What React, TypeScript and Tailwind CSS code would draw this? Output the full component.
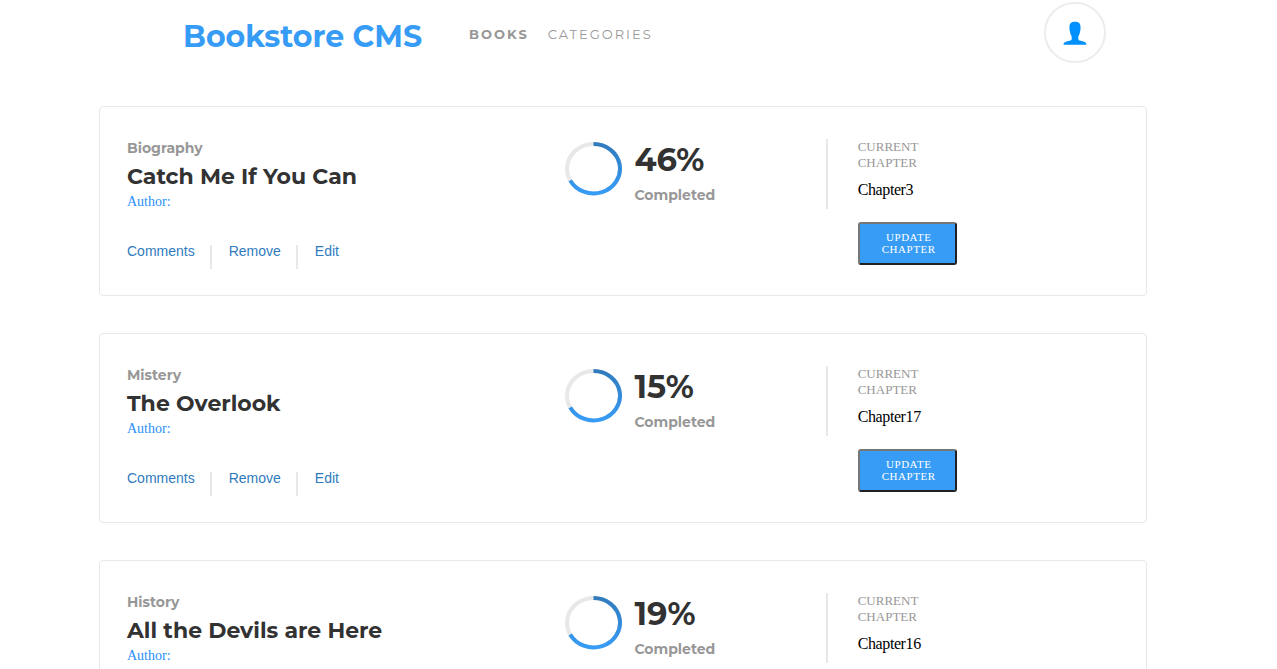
interface Book {
  id: number;
  category: string;
  title: string;
  percent: number;
  chapter: number;
}

const books: Book[] = [
  { id: 1, category: 'Biography', title: 'Catch Me If You Can', percent: 46, chapter: 3 },
  { id: 2, category: 'Mistery', title: 'The Overlook', percent: 15, chapter: 17 },
  { id: 3, category: 'History', title: 'All the Devils are Here', percent: 19, chapter: 16 },
];

function Header() {
  return (
    <header className="flex h-[66px] items-center pr-[41px] pl-[84px]">
      <h1 className="mt-2 font-[Montserrat,Inter,sans-serif] text-[30px] leading-[38px] font-bold whitespace-nowrap text-[#379cf6]">
        Bookstore CMS
      </h1>
      <nav className="mt-[2px] ml-[47px] flex gap-[19px] font-[Montserrat,Inter,sans-serif] text-[13px] leading-4 tracking-[2px] text-[#979797]">
        <a href="#books" className="font-bold">BOOKS</a>
        <a href="#categories">CATEGORIES</a>
      </nav>
      <button
        type="button"
        aria-label="Profile"
        className="mb-[1px] ml-auto flex h-[61px] w-[62px] items-center justify-center rounded-full border-2 border-[#ececec]"
      >
        <svg viewBox="0 0 24 24" className="size-6" fill="#0290ff" aria-hidden="true">
          <path d="M12 .7C8.300.7 6.400 2.500 6.500 6c-.2 1.700.1 3.200.5 4.800.4 2.200.9 3.500 1.700 4.600v2.500c-.1 1.100-.8 1.500-2.200 1.900C3.300 20.500.6 21.200.5 23.700h23c-.1-2.500-2.800-3.200-6-3.900-1.400-.4-2.100-.8-2.200-1.900v-2.500c.8-1.100 1.300-2.400 1.700-4.600.4-1.600.7-3.100.5-4.800C17.600 2.500 15.700.7 12 .7z" />
        </svg>
      </button>
    </header>
  );
}

function Ring({ id }: { id: number }) {
  const gradient = `ring-${id}`;
  return (
    <svg viewBox="0 0 57 54" className="mt-[3px] h-[54px] w-[57px] shrink-0" fill="none" strokeWidth="4" aria-hidden="true">
      <defs>
        <linearGradient id={gradient} x1="0" y1="0" x2="0" y2="1">
          <stop offset="0" stopColor="#307bbe" />
          <stop offset="1" stopColor="#379cf6" />
        </linearGradient>
      </defs>
      <ellipse cx="28.500" cy="26.700" rx="26.500" ry="24.700" stroke="#e8e8e8" />
      <path d="M28.500 2A26.500 24.700 0 1 1 5.200 38.500" stroke={`url(#${gradient})`} />
    </svg>
  );
}

function BookCard({ book }: { book: Book }) {
  return (
    <li className="grid h-[190px] grid-cols-[438fr_260fr_293fr] rounded-[4px] border border-[#e8e8e8] bg-white px-[27px] pt-8">
      <div>
        <p className="font-[Montserrat,Inter,sans-serif] text-sm leading-[18px] font-bold text-[#979797]">{book.category}</p>
        <h2 className="mt-[6px] font-[Montserrat,Inter,sans-serif] text-[22px] leading-[27px] font-bold text-[#323232]">
          {book.title}
        </h2>
        <p className="mt-1 font-['Liberation_Serif',serif] text-sm leading-4 text-[#2a8ff7]">Author:</p>
        <div className="mt-[31px] flex items-start font-['Liberation_Sans',sans-serif] text-sm leading-5 text-[#307bbe]">
          <button type="button" className="pr-[15px]">Comments</button>
          <span className="mt-1 h-6 w-[2px] bg-[#e8e8e8]" />
          <button type="button" className="pr-[15px] pl-[17px]">Remove</button>
          <span className="mt-1 h-6 w-[2px] bg-[#e8e8e8]" />
          <button type="button" className="pl-[17px]">Edit</button>
        </div>
      </div>
      <div className="flex items-start gap-3 font-[Montserrat,Inter,sans-serif] font-bold">
        <Ring id={book.id} />
        <div>
          <p className="text-[32px] leading-[42px] text-[#323232]">{book.percent}%</p>
          <p className="mt-1 text-sm leading-5 text-[#979797]">Completed</p>
        </div>
      </div>
      <div className="flex items-start font-['Liberation_Serif',serif]">
        <span className="h-[70px] w-[2px] bg-[#e8e8e8]" />
        <div className="ml-[30px] w-[99px]">
          <p className="text-[13px] leading-4 text-[#979797]">
            CURRENT
            <br />
            CHAPTER
          </p>
          <p className="mt-[9px] text-base leading-5 tracking-tight text-black">Chapter{book.chapter}</p>
          <button
            type="button"
            className="mt-[22px] w-full rounded-[3px] border-2 border-t-[#767676] border-r-[#212121] border-b-[#212121] border-l-[#767676] bg-[#379cf6] pt-[7px] pr-4 pb-2 pl-[19px] text-[11px] leading-3 tracking-wider text-white"
          >
            UPDATE CHAPTER
          </button>
        </div>
      </div>
    </li>
  );
}

export default function App() {
  return (
    <div className="min-h-screen bg-white pr-[130px] pb-10 pl-[99px]">
      <Header />
      <main className="mt-10">
        <ul className="flex flex-col gap-[37px]">
          {books.map((book) => (
            <BookCard key={book.id} book={book} />
          ))}
        </ul>
      </main>
    </div>
  );
}
